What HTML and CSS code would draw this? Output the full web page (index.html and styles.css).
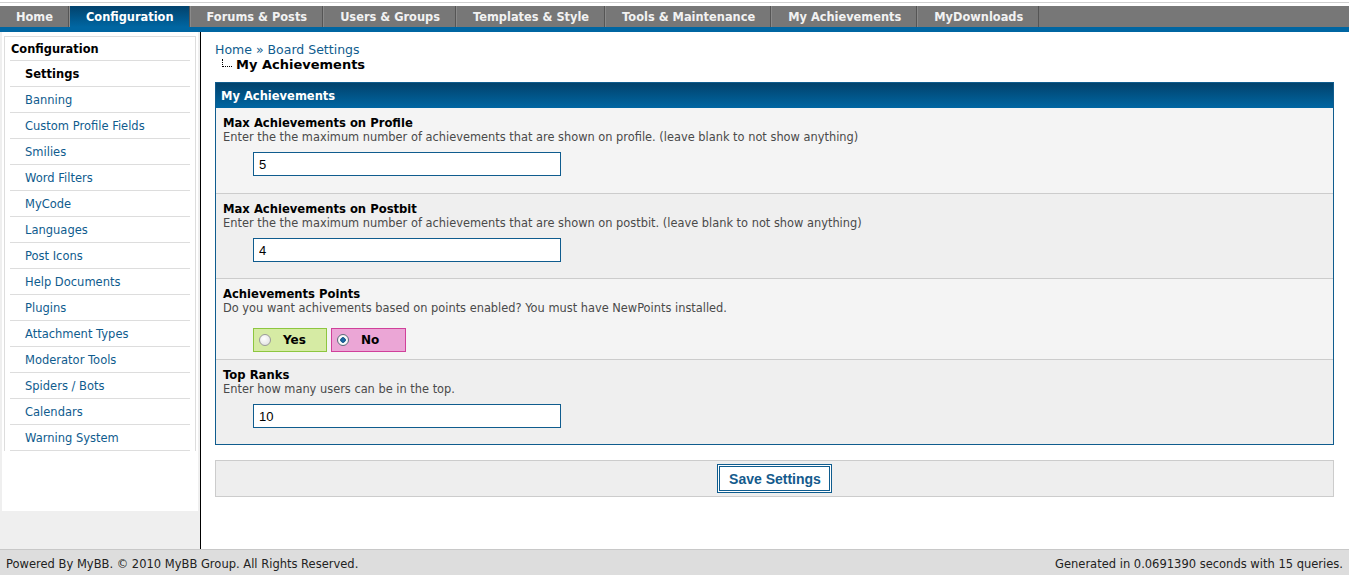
FILE: index.html
```html
<!DOCTYPE html>
<html lang="en">
<head>
    <meta charset="UTF-8">
    <title>Board Settings - My Achievements</title>
    <link rel="stylesheet" href="styles.css">
</head>
<body>
    <div class="topline"></div>
    <div class="menu">
        <a href="#" class="tab">Home</a>
        <a href="#" class="tab active">Configuration</a>
        <a href="#" class="tab">Forums &amp; Posts</a>
        <a href="#" class="tab">Users &amp; Groups</a>
        <a href="#" class="tab">Templates &amp; Style</a>
        <a href="#" class="tab">Tools &amp; Maintenance</a>
        <a href="#" class="tab">My Achievements</a>
        <a href="#" class="tab">MyDownloads</a>
    </div>
    <div class="menu-strip"></div>

    <div class="page">
        <div class="sidebar">
            <div class="side-box">
                <div class="side-menu">
                    <div class="side-title">Configuration</div>
                    <a href="#" class="side-item current">Settings</a>
                    <a href="#" class="side-item">Banning</a>
                    <a href="#" class="side-item">Custom Profile Fields</a>
                    <a href="#" class="side-item">Smilies</a>
                    <a href="#" class="side-item">Word Filters</a>
                    <a href="#" class="side-item">MyCode</a>
                    <a href="#" class="side-item">Languages</a>
                    <a href="#" class="side-item">Post Icons</a>
                    <a href="#" class="side-item">Help Documents</a>
                    <a href="#" class="side-item">Plugins</a>
                    <a href="#" class="side-item">Attachment Types</a>
                    <a href="#" class="side-item">Moderator Tools</a>
                    <a href="#" class="side-item">Spiders / Bots</a>
                    <a href="#" class="side-item">Calendars</a>
                    <a href="#" class="side-item">Warning System</a>
                </div>
            </div>
        </div>

        <div class="content">
            <div class="breadcrumb">
                <a href="#">Home</a> &raquo; <a href="#">Board Settings</a>
            </div>
            <div class="page-title"><span class="tree"></span>My Achievements</div>

            <div class="form-box">
                <div class="form-head">My Achievements</div>

                <div class="form-row">
                    <div class="label">Max Achievements on Profile</div>
                    <div class="desc">Enter the the maximum number of achievements that are shown on profile. (leave blank to not show anything)</div>
                    <input type="text" class="text-input" value="5">
                </div>

                <div class="form-row alt">
                    <div class="label">Max Achievements on Postbit</div>
                    <div class="desc">Enter the the maximum number of achievements that are shown on postbit. (leave blank to not show anything)</div>
                    <input type="text" class="text-input" value="4">
                </div>

                <div class="form-row short">
                    <div class="label">Achievements Points</div>
                    <div class="desc">Do you want achivements based on points enabled? You must have NewPoints installed.</div>
                    <div class="yesno">
                        <label class="choice yes"><span class="radio"></span>Yes</label>
                        <label class="choice no"><span class="radio checked"></span>No</label>
                    </div>
                </div>

                <div class="form-row alt">
                    <div class="label">Top Ranks</div>
                    <div class="desc">Enter how many users can be in the top.</div>
                    <input type="text" class="text-input" value="10">
                </div>
            </div>

            <div class="buttons">
                <button class="submit">Save Settings</button>
            </div>
        </div>
    </div>

    <div class="footer">
        <span>Powered By MyBB. &copy; 2010 MyBB Group. All Rights Reserved.</span>
        <span>Generated in 0.0691390 seconds with 15 queries.</span>
    </div>
</body>
</html>
```

FILE: styles.css
```css
body {
    margin: 0;
    font-family: "DejaVu Sans", Verdana, sans-serif;
    font-size: 11.5px;
    color: #000;
    background-color: #fff;
}
a {
    text-decoration: none;
}
.topline {
    height: 1px;
    margin: 2px 0 3px;
    background-color: #cfcfcf;
}
.menu {
    display: flex;
    height: 21px;
    background-color: #777;
}
.tab {
    display: flex;
    align-items: center;
    padding: 0 15px 0 16px;
    border-right: 1px solid #555;
    border-left: 1px solid #8a8a8a;
    color: #f2f2f2;
    font-weight: bold;
    font-size: 11.4px;
}
.tab:first-child {
    border-left: none;
}
.tab.active {
    background: linear-gradient(#02426c, #0066a2);
    color: #fff;
}
.menu-strip {
    height: 5px;
    background-color: #0066a2;
}
.page {
    display: flex;
    min-height: 517px;
}
.sidebar {
    width: 200px;
    border-right: 1px solid #000;
    background-color: #efefef;
}
.side-box {
    margin: 0 2px;
    padding: 4px 0 60px 2px;
    background-color: #fff;
}
.side-menu {
    width: 180px;
    padding: 0 5px;
    border: 1px solid #ddd;
    border-bottom: none;
}
.side-title {
    height: 23px;
    line-height: 25px;
    padding-left: 1px;
    font-weight: bold;
    font-size: 11.4px;
    border-bottom: 1px solid #ddd;
}
.side-item {
    display: block;
    height: 25px;
    line-height: 27px;
    padding-left: 15px;
    border-bottom: 1px solid #ddd;
    color: #0f5c8e;
}
.side-item.current {
    color: #000;
    font-weight: bold;
}
.content {
    flex: 1;
    padding: 10px 15px 0 14px;
}
.breadcrumb {
    font-size: 12.5px;
    line-height: 15px;
    color: #0f5c8e;
}
.breadcrumb a {
    color: #0f5c8e;
}
.page-title {
    display: flex;
    align-items: center;
    font-size: 13px;
    font-weight: bold;
    line-height: 16px;
}
.tree {
    width: 9px;
    height: 7px;
    margin: 0 4px 5px 7px;
    border-left: 1px dotted #000;
    border-bottom: 1px dotted #000;
}
.form-box {
    margin-top: 9px;
    border: 1px solid #0f5c8e;
}
.form-head {
    height: 25px;
    line-height: 27px;
    padding-left: 5px;
    background: linear-gradient(#02426c, #0066a2);
    color: #fff;
    font-weight: bold;
}
.form-row {
    padding: 8px 7px 16px;
    background-color: #f4f4f4;
    border-top: 1px solid #ccc;
}
.form-head + .form-row {
    border-top: none;
    padding-bottom: 17px;
}
.form-row.alt {
    background-color: #efefef;
}
.form-row.short {
    padding-bottom: 7px;
}
.label {
    font-weight: bold;
    font-size: 11.6px;
    line-height: 14px;
}
.desc {
    color: #4a4a4a;
    font-size: 11.4px;
    line-height: 14px;
}
.text-input {
    display: block;
    box-sizing: border-box;
    width: 308px;
    height: 24px;
    margin: 8px 0 0 30px;
    padding: 0 5px;
    border: 1px solid #0f5c8e;
    font-family: "Liberation Sans", Arial, sans-serif;
    font-size: 13px;
    color: #000;
    background-color: #fff;
}
.yesno {
    display: flex;
    gap: 4px;
    margin: 13px 0 0 30px;
}
.choice {
    display: flex;
    align-items: center;
    box-sizing: border-box;
    height: 24px;
    padding-left: 5px;
    font-size: 12px;
    font-weight: bold;
}
.choice.yes {
    width: 74px;
    background-color: #d6eba4;
    border: 1px solid #8dc63f;
}
.choice.no {
    width: 75px;
    background-color: #eba6d6;
    border: 1px solid #d0409a;
}
.radio {
    box-sizing: border-box;
    width: 12px;
    height: 12px;
    margin-right: 12px;
    border-radius: 50%;
    border: 1px solid #9a9a9a;
    background: radial-gradient(circle at 40% 35%, #fff, #dcdcdc);
}
.radio.checked {
    border-color: #5c6c7c;
    background: radial-gradient(circle, #1d6fb0 0, #1b5a8e 2.5px, #fff 3px, #e4e4e4 100%);
}
.buttons {
    display: flex;
    justify-content: center;
    margin-top: 15px;
    padding: 3px 0;
    background-color: #eee;
    border: 1px solid #ccc;
}
.submit {
    height: 29px;
    padding: 0 8px 0 9px;
    border: 3px double #0f5c8e;
    background-color: #fff;
    color: #145a8c;
    font-family: "Liberation Sans", Arial, sans-serif;
    font-size: 14px;
    font-weight: bold;
    cursor: pointer;
}
.footer {
    display: flex;
    justify-content: space-between;
    height: 25px;
    line-height: 28px;
    padding: 0 6px;
    background-color: #ddd;
    border-top: 1px solid #c8c8c8;
    color: #222;
}
```
